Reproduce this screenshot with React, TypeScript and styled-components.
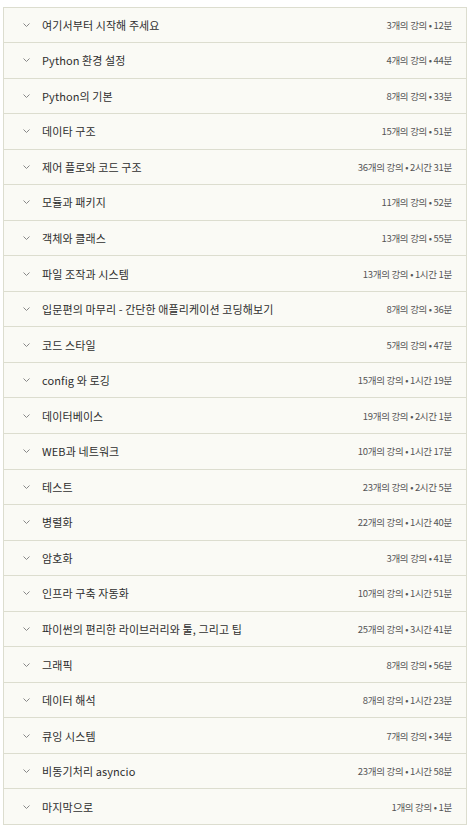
import React from 'react'
import styled, { createGlobalStyle } from 'styled-components'

const GlobalStyle = createGlobalStyle`
  body {
    margin: 0;
    background: #fff;
    font-family: "Noto Sans CJK KR", "Noto Sans", sans-serif;
  }
`

const Page = styled.div`
  padding: 7px 8px 4px 3px;
`

const List = styled.ul`
  list-style: none;
  margin: 0;
  padding: 0;
  border: 1px solid #dcddcf;
  background: #fafaf5;
`

const Row = styled.li`
  display: flex;
  align-items: center;
  height: 34.55px;
  padding: 0 14px 0 19px;
  border-top: 1px solid #dcddcf;
  &:first-child {
    border-top: none;
    height: 34px;
  }
`

const Chevron = styled.svg`
  width: 7px;
  height: 4px;
  flex: none;
  margin-right: 12px;
`

const Title = styled.span`
  flex: 1;
  font-size: 11px;
  color: #2e2e2e;
  letter-spacing: 0.1px;
  white-space: nowrap;
`

const Meta = styled.span`
  font-size: 9.5px;
  color: #555;
  letter-spacing: -0.3px;
  white-space: nowrap;
`

const sections: [string, string][] = [
  ['여기서부터 시작해 주세요', '3개의 강의 • 12분'],
  ['Python 환경 설정', '4개의 강의 • 44분'],
  ['Python의 기본', '8개의 강의 • 33분'],
  ['데이타 구조', '15개의 강의 • 51분'],
  ['제어 플로와 코드 구조', '36개의 강의 • 2시간 31분'],
  ['모듈과 패키지', '11개의 강의 • 52분'],
  ['객체와 클래스', '13개의 강의 • 55분'],
  ['파일 조작과 시스템', '13개의 강의 • 1시간 1분'],
  ['입문편의 마무리 - 간단한 애플리케이션 코딩해보기', '8개의 강의 • 36분'],
  ['코드 스타일', '5개의 강의 • 47분'],
  ['config 와 로깅', '15개의 강의 • 1시간 19분'],
  ['데이터베이스', '19개의 강의 • 2시간 1분'],
  ['WEB과 네트워크', '10개의 강의 • 1시간 17분'],
  ['테스트', '23개의 강의 • 2시간 5분'],
  ['병렬화', '22개의 강의 • 1시간 40분'],
  ['암호화', '3개의 강의 • 41분'],
  ['인프라 구축 자동화', '10개의 강의 • 1시간 51분'],
  ['파이썬의 편리한 라이브러리와 툴, 그리고 팁', '25개의 강의 • 3시간 41분'],
  ['그래픽', '8개의 강의 • 56분'],
  ['데이터 해석', '8개의 강의 • 1시간 23분'],
  ['큐잉 시스템', '7개의 강의 • 34분'],
  ['비동기처리 asyncio', '23개의 강의 • 1시간 58분'],
  ['마지막으로', '1개의 강의 • 1분'],
]

export default function App() {
  return (
    <Page>
      <GlobalStyle />
      <List>
        {sections.map(([title, meta]) => (
          <Row key={title}>
            <Chevron viewBox="0 0 7 4">
              <path d="M0.5 0.5 L3.5 3.5 L6.5 0.5" fill="none" stroke="#888" strokeWidth="1" />
            </Chevron>
            <Title>{title}</Title>
            <Meta>{meta}</Meta>
          </Row>
        ))}
      </List>
    </Page>
  )
}
